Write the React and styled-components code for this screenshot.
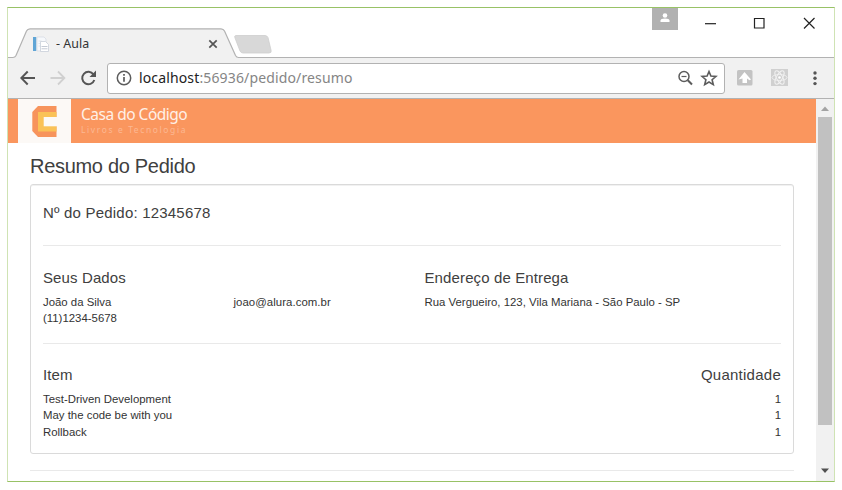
import React from "react";
import styled, { createGlobalStyle } from "styled-components";

const GlobalStyle = createGlobalStyle`
  *, *::before, *::after { box-sizing: border-box; }
  body { margin: 0; background: #fff; overflow: hidden; }
  h1, h2, p { margin: 0; font-weight: 400; }
`;

const Page = styled.div`
  width: 842px;
  height: 490px;
  padding: 7px 7px 8px 7px;
  background: #fff;
  font-family: "Liberation Sans", Arial, sans-serif;
`;

const Window = styled.div`
  width: 828px;
  height: 475px;
  display: flex;
  flex-direction: column;
  border: 1px solid #cfe3b4;
  border-top-color: #98c266;
  border-bottom-color: #98c266;
`;

const TabStrip = styled.div`
  position: relative;
  flex: none;
  height: 50px;
  display: flex;
  align-items: flex-end;
`;

const TabShapes = styled.svg`
  position: absolute;
  left: 0;
  bottom: -1px;
`;

const Tab = styled.div`
  position: relative;
  width: 236px;
  height: 29px;
  padding: 0 26px 0 24px;
  display: flex;
  align-items: center;
  font: 12.4px/29px "Noto Sans", sans-serif;
  letter-spacing: 0.05px;
  color: #333;
`;

const TabTitle = styled.span`
  flex: 1;
  padding-left: 6px;
`;

const WindowControls = styled.svg`
  position: absolute;
  right: 0;
  top: 0;
`;

const Toolbar = styled.div`
  position: relative;
  flex: none;
  height: 41px;
  display: flex;
  align-items: center;
  padding: 0 13px 0 12px;
  background: #f1f1f1;
  border-bottom: 1px solid #b2b2b2;
`;

const NavIcons = styled.svg`
  flex: none;
  margin-right: 10px;
`;

const AddressBar = styled.div`
  flex: none;
  width: 618px;
  height: 31px;
  padding: 0 6px 0 8px;
  display: flex;
  align-items: center;
  background: #fff;
  border: 1px solid #b2b2b2;
  border-radius: 3px;
`;

const Url = styled.span`
  flex: 1;
  padding-left: 7px;
  font: 14px/28px "Noto Sans", sans-serif;
  letter-spacing: 0.14px;
  color: #858585;
`;

const Host = styled.span`
  color: #222;
`;

const Viewport = styled.div`
  flex: 1;
  min-height: 0;
  display: flex;
`;

const Content = styled.main`
  flex: 1;
  min-width: 0;
  overflow: hidden;
  color: #404040;
`;

const Header = styled.header`
  display: flex;
  height: 44px;
  padding-left: 10px;
  background: #fa965e;
`;

const LogoTile = styled.div`
  width: 53px;
  height: 44px;
  background: #fcf9f6;
`;

const Brand = styled.div`
  padding: 6px 0 0 10px;
  font-family: "Noto Sans", sans-serif;
  white-space: nowrap;
`;

const BrandName = styled.div`
  font-size: 15.5px;
  line-height: 19px;
  letter-spacing: -0.5px;
  color: #fff0e7;
`;

const BrandTagline = styled.div`
  font-size: 8.5px;
  line-height: 12px;
  letter-spacing: 1.6px;
  color: #fcb893;
`;

const Body = styled.div`
  padding: 9px 22px 0;
`;

const PageTitle = styled.h1`
  font-size: 20px;
  line-height: 28px;
  letter-spacing: -0.3px;
  height: 32px;
`;

const Card = styled.section`
  height: 270px;
  padding: 13px 12px 0;
  border: 1px solid #dadada;
  border-radius: 3px;
  box-shadow: inset 0 1px 0 #f1f1f1;
`;

const Section = styled.div`
  display: flex;
  height: ${(p) => p.$height}px;
  padding-top: ${(p) => p.$top || 0}px;
  ${(p) => p.$ruled && "border-bottom: 1px solid #e9e9e9;"}
`;

const Column = styled.div`
  width: ${(p) => p.$width};
  text-align: ${(p) => p.$align || "left"};
  white-space: nowrap;
`;

const SectionTitle = styled.h2`
  height: 25px;
  font-size: 15px;
  line-height: 18px;
  letter-spacing: ${(p) => p.$spacing ?? 0.12}px;
`;

const Line = styled.p`
  font-size: 11.4px;
  line-height: 16.3px;
  color: #333;
  letter-spacing: ${(p) => p.$spacing || 0}px;
`;

const Divider = styled.div`
  height: 1px;
  margin-top: 16px;
  background: #e9e9e9;
`;

const Scrollbar = styled.div`
  flex: none;
  width: 18px;
  background: #f1f1f1;
  display: flex;
  flex-direction: column;
  align-items: center;
`;

const ScrollButton = styled.svg`
  flex: none;
`;

const Thumb = styled.div`
  width: 14px;
  height: 308px;
  margin-bottom: auto;
  background: #c1c1c1;
`;

const orderItems = ["Test-Driven Development", "May the code be with you", "Rollback"];

function Tabs() {
  return (
    <TabStrip>
      <TabShapes width="826" height="31" viewBox="0 0 826 31">
        <path d="M0 31V30H5Q7 30 8 28L18.500 3Q19.500.8 22 .8H213Q215.500.8 216.500 3L228 28Q229 30 231 30V31Z" fill="#f1f1f1" />
        <path d="M0 29.500H5Q7 29.500 8 27.500L18.500 3Q19.500.8 22 .8H213Q215.500.8 216.500 3L227.500 27.500Q228.500 29.500 230.500 29.500H826" fill="none" stroke="#b2b2b2" strokeWidth="1.200" />
        <path d="M228 7.500H257Q259 7.500 260 9.500L263 22Q264 25 261 25H235Q233 25 232 23L227 10Q226 7.500 228 7.500Z" fill="#d8d8d8" stroke="#cecece" strokeWidth=".8" />
      </TabShapes>
      <Tab>
        <svg width="18" height="18" viewBox="0 0 18 18">
          <path d="M1 2h3.300v14H1z" fill="#5fa5d6" />
          <path d="M5 2h7l2 2v12H5z" fill="#f6f8fb" stroke="#d3d9e2" strokeWidth=".7" />
          <path d="M6.500 6h3M6.500 8.500h3M6.500 11h3" stroke="#dbe0e8" strokeWidth=".8" />
          <path d="M8.500 6.500h5l3 3v7h-8z" fill="#fff" stroke="#c9cfd9" strokeWidth=".8" />
          <path d="M9.500 11.500h6M9.500 13.800h6" stroke="#bdc4cf" strokeWidth=".9" />
        </svg>
        <TabTitle>- Aula</TabTitle>
        <svg width="10" height="10" viewBox="0 0 10 10">
          <path d="M1.300 1.300l7.400 7.400M8.700 1.300l-7.400 7.400" stroke="#555" strokeWidth="1.700" />
        </svg>
      </Tab>
      <WindowControls width="186" height="34" viewBox="0 0 186 34">
        <path d="M4 0h26v22H4z" fill="#b1b1b1" />
        <circle cx="17" cy="7.500" r="2.300" fill="#fff" />
        <path d="M12.500 14v-1.500q0-2 4.500-2t4.500 2V14z" fill="#fff" />
        <path d="M57 15.700h11" stroke="#222" strokeWidth="1.200" />
        <path d="M106.500 10.500h9.500v9.500h-9.500z" fill="none" stroke="#222" strokeWidth="1.200" />
        <path d="M156 10l10.500 10.500M166.500 10L156 20.500" stroke="#222" strokeWidth="1.200" />
      </WindowControls>
    </TabStrip>
  );
}

function Navigation() {
  return (
    <Toolbar>
      <NavIcons width="77" height="24" viewBox="0 0 77 24" fill="none">
        <path d="M15 12H1.500M7.700 5.500L1.300 12l6.400 6.500" stroke="#555" strokeWidth="2" />
        <path d="M30.500 12H44M38 5.500l6.400 6.500L38 18.500" stroke="#d0d0d0" strokeWidth="1.800" />
        <path d="M73.500 8.500A6.200 6.200 0 1 0 74.300 14" stroke="#555" strokeWidth="2" />
        <path d="M76 4.500V11h-6.500z" fill="#555" />
      </NavIcons>
      <AddressBar>
        <svg width="16" height="16" viewBox="0 0 16 16" fill="none" stroke="#5c5c5c" strokeWidth="1.500">
          <circle cx="8" cy="8" r="6.700" />
          <path d="M8 7v4.700M8 4v1.700" strokeWidth="1.700" />
        </svg>
        <Url><Host>localhost</Host>:56936/pedido/resumo</Url>
        <svg width="42" height="18" viewBox="0 0 42 18" fill="none" stroke="#5c5c5c">
          <circle cx="8" cy="7.500" r="5" strokeWidth="1.500" />
          <path d="M11.800 11.300L16 15.500" strokeWidth="2" />
          <path d="M5.500 7.500h5" strokeWidth="1.200" />
          <path d="M33 2.500l1.900 4.600 5 .4-3.800 3.200 1.200 4.900L33 13l-4.300 2.600 1.200-4.900-3.800-3.200 5-.4z" strokeWidth="1.600" />
        </svg>
      </AddressBar>
      <svg width="94" height="24" viewBox="0 0 94 24">
        <rect x="12" y="4" width="15.500" height="15.500" rx="1.500" fill="#c3c3c3" />
        <path d="M17.500 17v-4.500l-4 1L19.500 6l6.500 7.500-1.500.8-2.500-1.800V17z" fill="#fff" />
        <path d="M46 3h17v17H46z" fill="#d0d0d0" />
        <g fill="none" stroke="#f1f1f1" strokeWidth=".9">
          <ellipse cx="54.500" cy="11.500" rx="7.500" ry="3" />
          <ellipse cx="54.500" cy="11.500" rx="7.500" ry="3" transform="rotate(60 54.500 11.500)" />
          <ellipse cx="54.500" cy="11.500" rx="7.500" ry="3" transform="rotate(120 54.500 11.500)" />
        </g>
        <circle cx="54.500" cy="11.500" r="1.300" fill="#fff" />
        <g fill="#555"><circle cx="90" cy="7" r="1.700" /><circle cx="90" cy="12.300" r="1.700" /><circle cx="90" cy="17.600" r="1.700" /></g>
      </svg>
    </Toolbar>
  );
}

export default function App() {
  return (
    <Page>
      <GlobalStyle />
      <Window>
        <Tabs />
        <Navigation />
        <Viewport>
          <Content>
            <Header>
              <LogoTile>
                <svg width="53" height="44" viewBox="0 0 53 44">
                  <path d="M20 7H38.500V38H20L14.300 32V13z" fill="#f7945c" />
                  <path d="M20 13H38.500V32.500H20z" fill="#fac257" />
                  <path d="M25.700 18H39V27.300H25.700z" fill="#fcf9f6" />
                </svg>
              </LogoTile>
              <Brand>
                <BrandName>Casa do Código</BrandName>
                <BrandTagline>Livros e Tecnologia</BrandTagline>
              </Brand>
            </Header>
            <Body>
              <PageTitle>Resumo do Pedido</PageTitle>
              <Card>
                <Section $height={48} $top={6} $ruled>
                  <SectionTitle $spacing={0.2}>Nº do Pedido: 12345678</SectionTitle>
                </Section>
                <Section $height={98} $top={23} $ruled>
                  <Column $width="190.500px">
                    <SectionTitle>Seus Dados</SectionTitle>
                    <Line>João da Silva</Line>
                    <Line>(11)1234-5678</Line>
                  </Column>
                  <Column $width="191px">
                    <SectionTitle />
                    <Line $spacing={0.05}>joao@alura.com.br</Line>
                  </Column>
                  <Column $width="auto">
                    <SectionTitle>Endereço de Entrega</SectionTitle>
                    <Line>Rua Vergueiro, 123, Vila Mariana - São Paulo - SP</Line>
                  </Column>
                </Section>
                <Section $height={100} $top={22}>
                  <Column $width="50%">
                    <SectionTitle>Item</SectionTitle>
                    {orderItems.map((name) => <Line key={name}>{name}</Line>)}
                  </Column>
                  <Column $width="50%" $align="right">
                    <SectionTitle $spacing={0.25}>Quantidade</SectionTitle>
                    {orderItems.map((name) => <Line key={name}>1</Line>)}
                  </Column>
                </Section>
              </Card>
              <Divider />
            </Body>
          </Content>
          <Scrollbar>
            <ScrollButton width="18" height="18" viewBox="0 0 18 18">
              <path d="M5 12l4-4.500 4 4.500z" fill="#a3a3a3" />
            </ScrollButton>
            <Thumb />
            <ScrollButton width="18" height="18" viewBox="0 0 18 18">
              <path d="M5 5.500h8L9 10z" fill="#505050" />
            </ScrollButton>
          </Scrollbar>
        </Viewport>
      </Window>
    </Page>
  );
}
